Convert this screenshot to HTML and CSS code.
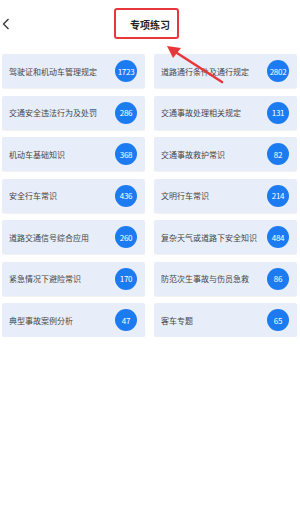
FILE: index.html
```html
<!DOCTYPE html>
<html lang="zh-CN">
<head>
    <meta charset="UTF-8">
    <meta name="viewport" content="width=device-width, initial-scale=1.0">
    <title>专项练习</title>
    <link rel="stylesheet" href="styles.css">
</head>
<body>
    <div class="header">
        <svg class="back" width="8" height="12" viewBox="0 0 8 12"><path d="M6.5 1 L1.5 6 L6.5 11" fill="none" stroke="#333" stroke-width="1.3"/></svg>
        <span class="title">专项练习</span>
    </div>

    <div class="grid">
        <div class="card"><span>驾驶证和机动车管理规定</span><b class="num">1723</b></div>
        <div class="card"><span>道路通行条件及通行规定</span><b class="num">2802</b></div>
        <div class="card"><span>交通安全违法行为及处罚</span><b class="num">286</b></div>
        <div class="card"><span>交通事故处理相关规定</span><b class="num">131</b></div>
        <div class="card"><span>机动车基础知识</span><b class="num">368</b></div>
        <div class="card"><span>交通事故救护常识</span><b class="num">82</b></div>
        <div class="card"><span>安全行车常识</span><b class="num">436</b></div>
        <div class="card"><span>文明行车常识</span><b class="num">214</b></div>
        <div class="card"><span>道路交通信号综合应用</span><b class="num">260</b></div>
        <div class="card"><span>复杂天气或道路下安全知识</span><b class="num">484</b></div>
        <div class="card"><span>紧急情况下避险常识</span><b class="num">170</b></div>
        <div class="card"><span>防范次生事故与伤员急救</span><b class="num">86</b></div>
        <div class="card"><span>典型事故案例分析</span><b class="num">47</b></div>
        <div class="card"><span>客车专题</span><b class="num">65</b></div>
    </div>

    <!-- 标注：红框和箭头 -->
    <div class="mark-box"></div>
    <svg class="mark-arrow" width="70" height="50" viewBox="0 0 70 50">
        <path d="M12 8 L57 37" stroke="#e8373a" stroke-width="2.6" stroke-linecap="round"/>
        <polygon points="2,1 16,3 8,13" fill="#e8373a"/>
    </svg>
</body>
</html>
```

FILE: styles.css
```css
body { margin: 0; background: #fff; font-family: "Noto Sans CJK SC", "Noto Sans", sans-serif; color: #333; }
.header { height: 54px; display: flex; align-items: center; justify-content: center; position: relative; }
.back { position: absolute; left: 2px; top: 18px; }
.title { font-size: 10px; font-weight: bold; color: #222; margin-top: -5px; }
.grid { display: grid; grid-template-columns: 143px 143px; column-gap: 9px; row-gap: 7.5px; padding: 0 3px 0 2px; }
.card { height: 34px; display: flex; align-items: center; justify-content: space-between; padding: 0 8px 0 7px; background: #e8eef9; border-radius: 2px; box-shadow: 0 1px 1px rgba(0, 0, 0, 0.06); }
.card span { font-size: 8px; color: #444; white-space: nowrap; }
.num { width: 22px; height: 22px; border-radius: 50%; background: #1d7bf2; color: #fff; font-size: 8px; font-weight: normal; display: flex; align-items: center; justify-content: center; letter-spacing: -0.3px; }
.mark-box { position: absolute; left: 114px; top: 8px; width: 61px; height: 27px; border: 2px solid #e8373a; border-radius: 3px; }
.mark-arrow { position: absolute; left: 165px; top: 45px; }
```
